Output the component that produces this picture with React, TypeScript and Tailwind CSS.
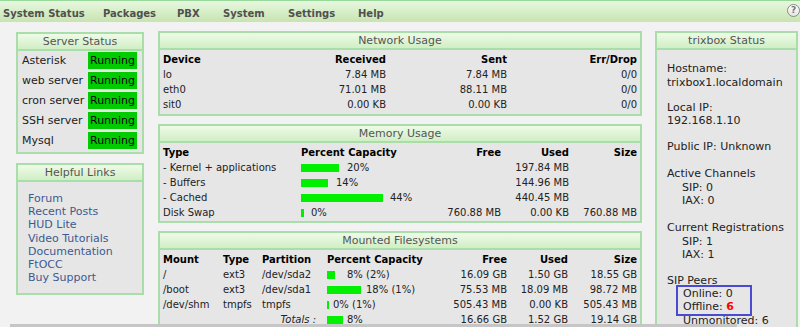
import React from "react";

function Panel({
  title,
  className,
  children,
}: {
  title: string;
  className?: string;
  children: React.ReactNode;
}) {
  return (
    <div className={"border-2 border-[#a9dda9] bg-[#e6e6e6] " + (className ?? "")}>
      <div className="h-[17px] border-b-2 border-[#a9dda9] bg-linear-to-b from-[#eefbe8] to-[#d0eec4] text-center text-[11px] leading-[15px] text-[#555]">
        {title}
      </div>
      {children}
    </div>
  );
}

function Bar({ w, gap, label }: { w: number; gap: number; label: string }) {
  return (
    <div className="flex items-center">
      <div className="h-[8px] bg-[#00f000]" style={{ width: w }} />
      <span style={{ marginLeft: gap }}>{label}</span>
    </div>
  );
}

const menu: [string, string][] = [
  ["System Status", "w-[100px]"],
  ["Packages", "w-[74px]"],
  ["PBX", "w-[46px]"],
  ["System", "w-[65px]"],
  ["Settings", "w-[70px]"],
  ["Help", "w-[60px]"],
];

const services = ["Asterisk", "web server", "cron server", "SSH server", "Mysql"];
const links = [
  "Forum",
  "Recent Posts",
  "HUD Lite",
  "Video Tutorials",
  "Documentation",
  "FtOCC",
  "Buy Support",
];

const net = [
  ["lo", "7.84 MB", "7.84 MB", "0/0"],
  ["eth0", "71.01 MB", "88.11 MB", "0/0"],
  ["sit0", "0.00 KB", "0.00 KB", "0/0"],
];

const mem: { t: string; w: number; g: number; p: string; free: string; used: string; size: string }[] = [
  { t: "- Kernel + applications", w: 38, g: 8, p: "20%", free: "", used: "197.84 MB", size: "" },
  { t: "- Buffers", w: 27, g: 8, p: "14%", free: "", used: "144.96 MB", size: "" },
  { t: "- Cached", w: 82, g: 7, p: "44%", free: "", used: "440.45 MB", size: "" },
  { t: "Disk Swap", w: 3, g: 7, p: "0%", free: "760.88 MB", used: "0.00 KB", size: "760.88 MB" },
];

const fs: { m: string; t: string; part: string; w: number; g: number; p: string; free: string; used: string; size: string }[] = [
  { m: "/", t: "ext3", part: "/dev/sda2", w: 8, g: 12, p: "8% (2%)", free: "16.09 GB", used: "1.50 GB", size: "18.55 GB" },
  { m: "/boot", t: "ext3", part: "/dev/sda1", w: 34, g: 5, p: "18% (1%)", free: "75.53 MB", used: "18.09 MB", size: "98.72 MB" },
  { m: "/dev/shm", t: "tmpfs", part: "tmpfs", w: 2, g: 4, p: "0% (1%)", free: "505.43 MB", used: "0.00 KB", size: "505.43 MB" },
];

export default function App() {
  return (
    <div className="relative w-[800px] h-[327px] overflow-hidden bg-[#f2f2f2] font-['DejaVu_Sans',Verdana,sans-serif] text-[#222]">
      {/* menu bar */}
      <div className="flex h-[22px] items-start border-t border-[#98d898] bg-linear-to-b from-[#e6f8e0] to-[#c8e4b0]">
        <div className="flex pl-[3px]">
          {menu.map(([m, w]) => (
            <span key={m} className={"mt-[6px] text-[10px] font-bold leading-[13px] text-[#505050] " + w}>
              {m}
            </span>
          ))}
        </div>
        <div className="ml-auto mr-[0px] mt-[3px] flex h-[13px] w-[13px] items-center justify-center rounded-full border border-[#8a8a8a] bg-linear-to-b from-white to-[#e4e4e4] text-[9px] font-bold leading-none text-[#777]">
          ?
        </div>
      </div>

      <div className="flex items-start pt-[9px]">
        {/* left column */}
        <div className="ml-[16px] mt-[1px] flex w-[128px] flex-col gap-[9px]">
          <Panel title="Server Status">
            <div className="pt-[1px] pl-[4px]">
              {services.map((s) => (
                <div key={s} className="grid h-[20px] grid-cols-[66px_49px] text-[11px] leading-[17px]">
                  <span>{s}</span>
                  <span className="h-[17px] bg-[#00cc00] pl-[2px] text-black">Running</span>
                </div>
              ))}
            </div>
          </Panel>
          <Panel title="Helpful Links">
            <div className="pl-[10px] pt-[10px] pb-[9px] text-[11px] leading-[13.2px] text-[#3d5a90]">
              {links.map((l) => (
                <div key={l}>{l}</div>
              ))}
            </div>
          </Panel>
        </div>

        {/* middle column */}
        <div className="ml-[14px] flex w-[484px] flex-col gap-[8px] text-[10px] leading-[15px]">
          <Panel title="Network Usage">
            <div className="grid grid-cols-[148px_75px_121px_130px] py-[2px] pl-[3px]">
              <span className="font-bold text-black">Device</span>
              <span className="text-right font-bold text-black">Received</span>
              <span className="text-right font-bold text-black">Sent</span>
              <span className="text-right font-bold text-black">Err/Drop</span>
              {net.map((r) => (
                <React.Fragment key={r[0]}>
                  <span>{r[0]}</span>
                  <span className="text-right">{r[1]}</span>
                  <span className="text-right">{r[2]}</span>
                  <span className="text-right">{r[3]}</span>
                </React.Fragment>
              ))}
            </div>
          </Panel>

          <Panel title="Memory Usage">
            <div className="grid grid-cols-[138px_129px_71px_68px_68px] pt-[2px] pb-[1px] pl-[3px]">
              <span className="font-bold text-black">Type</span>
              <span className="font-bold text-black">Percent Capacity</span>
              <span className="text-right font-bold text-black">Free</span>
              <span className="text-right font-bold text-black">Used</span>
              <span className="text-right font-bold text-black">Size</span>
              {mem.map((r) => (
                <React.Fragment key={r.t}>
                  <span>{r.t}</span>
                  <Bar w={r.w} gap={r.g} label={r.p} />
                  <span className="text-right">{r.free}</span>
                  <span className="text-right">{r.used}</span>
                  <span className="text-right">{r.size}</span>
                </React.Fragment>
              ))}
            </div>
          </Panel>

          <Panel title="Mounted Filesystems">
            <div className="grid grid-cols-[60px_39px_65px_103px_77px_61px_69px] py-[2px] pl-[3px]">
              <span className="font-bold text-black">Mount</span>
              <span className="font-bold text-black">Type</span>
              <span className="font-bold text-black">Partition</span>
              <span className="font-bold text-black">Percent Capacity</span>
              <span className="text-right font-bold text-black">Free</span>
              <span className="text-right font-bold text-black">Used</span>
              <span className="text-right font-bold text-black">Size</span>
              {fs.map((r) => (
                <React.Fragment key={r.m}>
                  <span>{r.m}</span>
                  <span>{r.t}</span>
                  <span>{r.part}</span>
                  <Bar w={r.w} gap={r.g} label={r.p} />
                  <span className="text-right">{r.free}</span>
                  <span className="text-right">{r.used}</span>
                  <span className="text-right">{r.size}</span>
                </React.Fragment>
              ))}
              <span className="col-span-3 pr-[11px] text-right italic">Totals :</span>
              <Bar w={16} gap={4} label="8%" />
              <span className="text-right">16.66 GB</span>
              <span className="text-right">1.52 GB</span>
              <span className="text-right">19.14 GB</span>
            </div>
          </Panel>
        </div>

        {/* right column */}
        <div className="ml-[13px] w-[143px]">
          <Panel title="trixbox Status" className="h-[320px]">
            <div className="pl-[10px] pt-[12px] text-[11px] leading-[13.5px]">
              <div>Hostname:</div>
              <div>trixbox1.localdomain</div>
              <div className="mt-[11.5px]">Local IP:</div>
              <div>192.168.1.10</div>
              <div className="mt-[12.5px]">Public IP: Unknown</div>
              <div className="mt-[13.5px]">Active Channels</div>
              <div className="pl-[15px]">SIP: 0</div>
              <div className="pl-[15px]">IAX: 0</div>
              <div className="mt-[13.5px]">Current Registrations</div>
              <div className="pl-[15px]">SIP: 1</div>
              <div className="pl-[15px]">IAX: 1</div>
              <div className="mt-[12.5px]">SIP Peers</div>
              <div className="-mt-[3px] ml-[9px] w-[76px] border-2 border-[#4b4bd2] pt-[0.5px] pb-[1px] pl-[5px] leading-[13px]">
                <div>Online: 0</div>
                <div>
                  Offline: <span className="font-bold text-[#ff0000]">6</span>
                </div>
              </div>
              <div className="-mt-[2px] pl-[16px]">Unmonitored: 6</div>
            </div>
          </Panel>
        </div>
      </div>

      <div className="absolute bottom-0 left-[10px] h-[3px] w-[727px] bg-[#c6c6c6]" />
    </div>
  );
}
